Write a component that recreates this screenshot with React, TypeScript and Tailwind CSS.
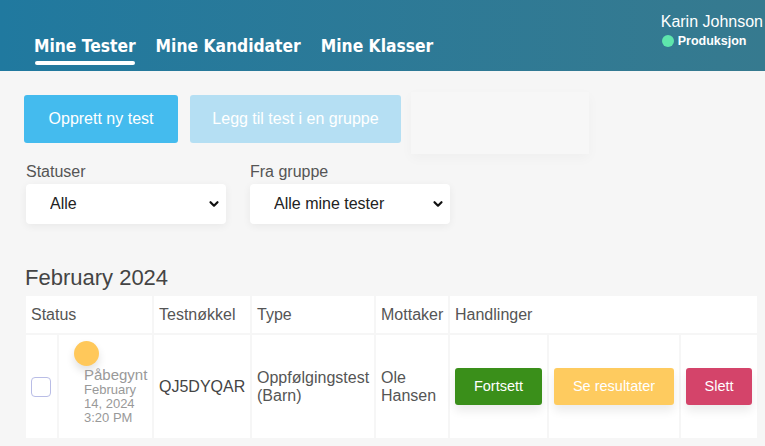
import React from 'react';

function Chevron() {
  return (
    <svg width="12" height="12" viewBox="0 0 12 12" className="pointer-events-none absolute right-[6px] top-1/2 -translate-y-1/2">
      <path d="M2.5 4.2 L6 7.7 L9.5 4.2" fill="none" stroke="#111" strokeWidth="2.2" strokeLinecap="round" strokeLinejoin="round" />
    </svg>
  );
}

function SelectBox({ label, value }: { label: string; value: string }) {
  return (
    <div className="flex flex-col">
      <label className="ml-[2px] text-[16px] leading-[20px] text-[#555]">{label}</label>
      <div className="relative mt-[2px] ml-[2px] w-[200px]">
        <select
          defaultValue={value}
          className="h-[40px] w-full appearance-none rounded-[4px] bg-white pl-[24px] text-[16px] text-[#222] shadow-[0_2px_8px_rgba(0,0,0,0.06)] outline-none"
        >
          <option>{value}</option>
        </select>
        <Chevron />
      </div>
    </div>
  );
}

export default function App() {
  const tabs = ['Mine Tester', 'Mine Kandidater', 'Mine Klasser'];
  const btnShadow = 'shadow-[0_6px_10px_rgba(0,0,0,0.08)]';

  return (
    <div className="min-h-[446px] bg-[#f6f6f6] font-['Liberation_Sans',Arial,sans-serif]">
      <header className="flex h-[71px] items-start justify-between bg-linear-to-r from-[#20799f] to-[#367a8f]">
        <nav className="mt-[35px] ml-[34px] flex gap-[20px] font-['DejaVu_Sans_Condensed','DejaVu_Sans',sans-serif] text-[17.3px] font-semibold text-white">
          {tabs.map((t, i) => (
            <div key={t} className="flex flex-col">
              <span className="leading-[22px]">{t}</span>
              {i === 0 && <span className="mt-[4px] ml-[1px] h-[4px] w-[100px] rounded-full bg-white" />}
            </div>
          ))}
        </nav>
        <div className="mt-[12px] mr-[2px] flex flex-col text-white">
          <span className="text-[16px] leading-[19px]">Karin Johnson</span>
          <span className="mt-[2px] ml-[1px] flex items-center gap-[4px] text-[12.5px] leading-[16px] font-semibold">
            <span className="h-[12px] w-[12px] rounded-full bg-[#5ee6ac]" />
            Produksjon
          </span>
        </div>
      </header>

      <main className="px-[24px] pt-[24px]">
        <div className="flex items-start gap-[12px]">
          <button className="h-[48px] w-[154px] rounded-[3px] bg-[#44bbee] text-[16px] text-white">
            Opprett ny test
          </button>
          <button className="h-[48px] w-[211px] rounded-[3px] bg-[#b5dff3] text-[16px] text-white">
            Legg til test i en gruppe
          </button>
          <div className="-mt-[3px] -mb-[11px] ml-[-2px] h-[62px] w-[178px] bg-[#f7f7f7] shadow-[0_4px_12px_rgba(0,0,0,0.03)]" />
        </div>

        <div className="mt-[19px] flex gap-[22px]">
          <SelectBox label="Statuser" value="Alle" />
          <SelectBox label="Fra gruppe" value="Alle mine tester" />
        </div>

        <h2 className="mt-[41px] ml-[1px] text-[22px] leading-[26px] text-[#444]">February 2024</h2>

        <table className="mt-[3px] w-[735px] table-fixed border-separate border-spacing-[2px] text-[16px] text-[#555]">
          <colgroup>
            <col className="w-[31px]" />
            <col className="w-[93px]" />
            <col className="w-[96px]" />
            <col className="w-[122px]" />
            <col className="w-[72px]" />
            <col className="w-[97px]" />
            <col className="w-[130px]" />
            <col className="w-[76px]" />
          </colgroup>
          <thead>
            <tr className="h-[37px]">
              <th colSpan={2} className="bg-white pl-[5px] text-left font-normal">Status</th>
              <th className="bg-white pl-[5px] text-left font-normal">Testnøkkel</th>
              <th className="bg-white pl-[5px] text-left font-normal">Type</th>
              <th className="bg-white pl-[5px] text-left font-normal">Mottaker</th>
              <th colSpan={3} className="bg-white pl-[5px] text-left font-normal">Handlinger</th>
            </tr>
          </thead>
          <tbody>
            <tr className="h-[103px]">
              <td className="bg-white pl-[5px] align-middle">
                <span className="block h-[20px] w-[20px] rounded-[4px] border border-[#b9bde6] bg-white" />
              </td>
              <td className="bg-white align-top">
                <div className="ml-[15px] mt-[6px] h-[25px] w-[25px] rounded-full bg-[#ffc85a] shadow-[0_5px_8px_rgba(0,0,0,0.12)]" />
                <div className="ml-[25px] mt-[1px] text-[#999]">
                  <div className="text-[15px] leading-[16px]">Påbegynt</div>
                  <div className="text-[13px] leading-[14px]">February</div>
                  <div className="text-[13px] leading-[14px]">14, 2024</div>
                  <div className="text-[13px] leading-[14px]">3:20 PM</div>
                </div>
              </td>
              <td className="bg-white pl-[5px] align-middle text-[#444]">QJ5DYQAR</td>
              <td className="bg-white pl-[5px] align-middle leading-[18px]">
                Oppfølgingstest
                <br />
                (Barn)
              </td>
              <td className="bg-white pl-[5px] align-middle leading-[18px]">
                Ole
                <br />
                Hansen
              </td>
              <td className="bg-white pl-[5px] align-middle">
                <button className={`h-[37px] w-[87px] rounded-[3px] bg-[#3a8f1a] text-[14.5px] text-white ${btnShadow}`}>
                  Fortsett
                </button>
              </td>
              <td className="bg-white pl-[5px] align-middle">
                <button className={`h-[37px] w-[120px] rounded-[3px] bg-[#fecb5f] text-[14.5px] text-white ${btnShadow}`}>
                  Se resultater
                </button>
              </td>
              <td className="bg-white pl-[5px] align-middle">
                <button className={`h-[37px] w-[66px] rounded-[3px] bg-[#d4446a] text-[14.5px] text-white ${btnShadow}`}>
                  Slett
                </button>
              </td>
            </tr>
          </tbody>
        </table>
      </main>
    </div>
  );
}
